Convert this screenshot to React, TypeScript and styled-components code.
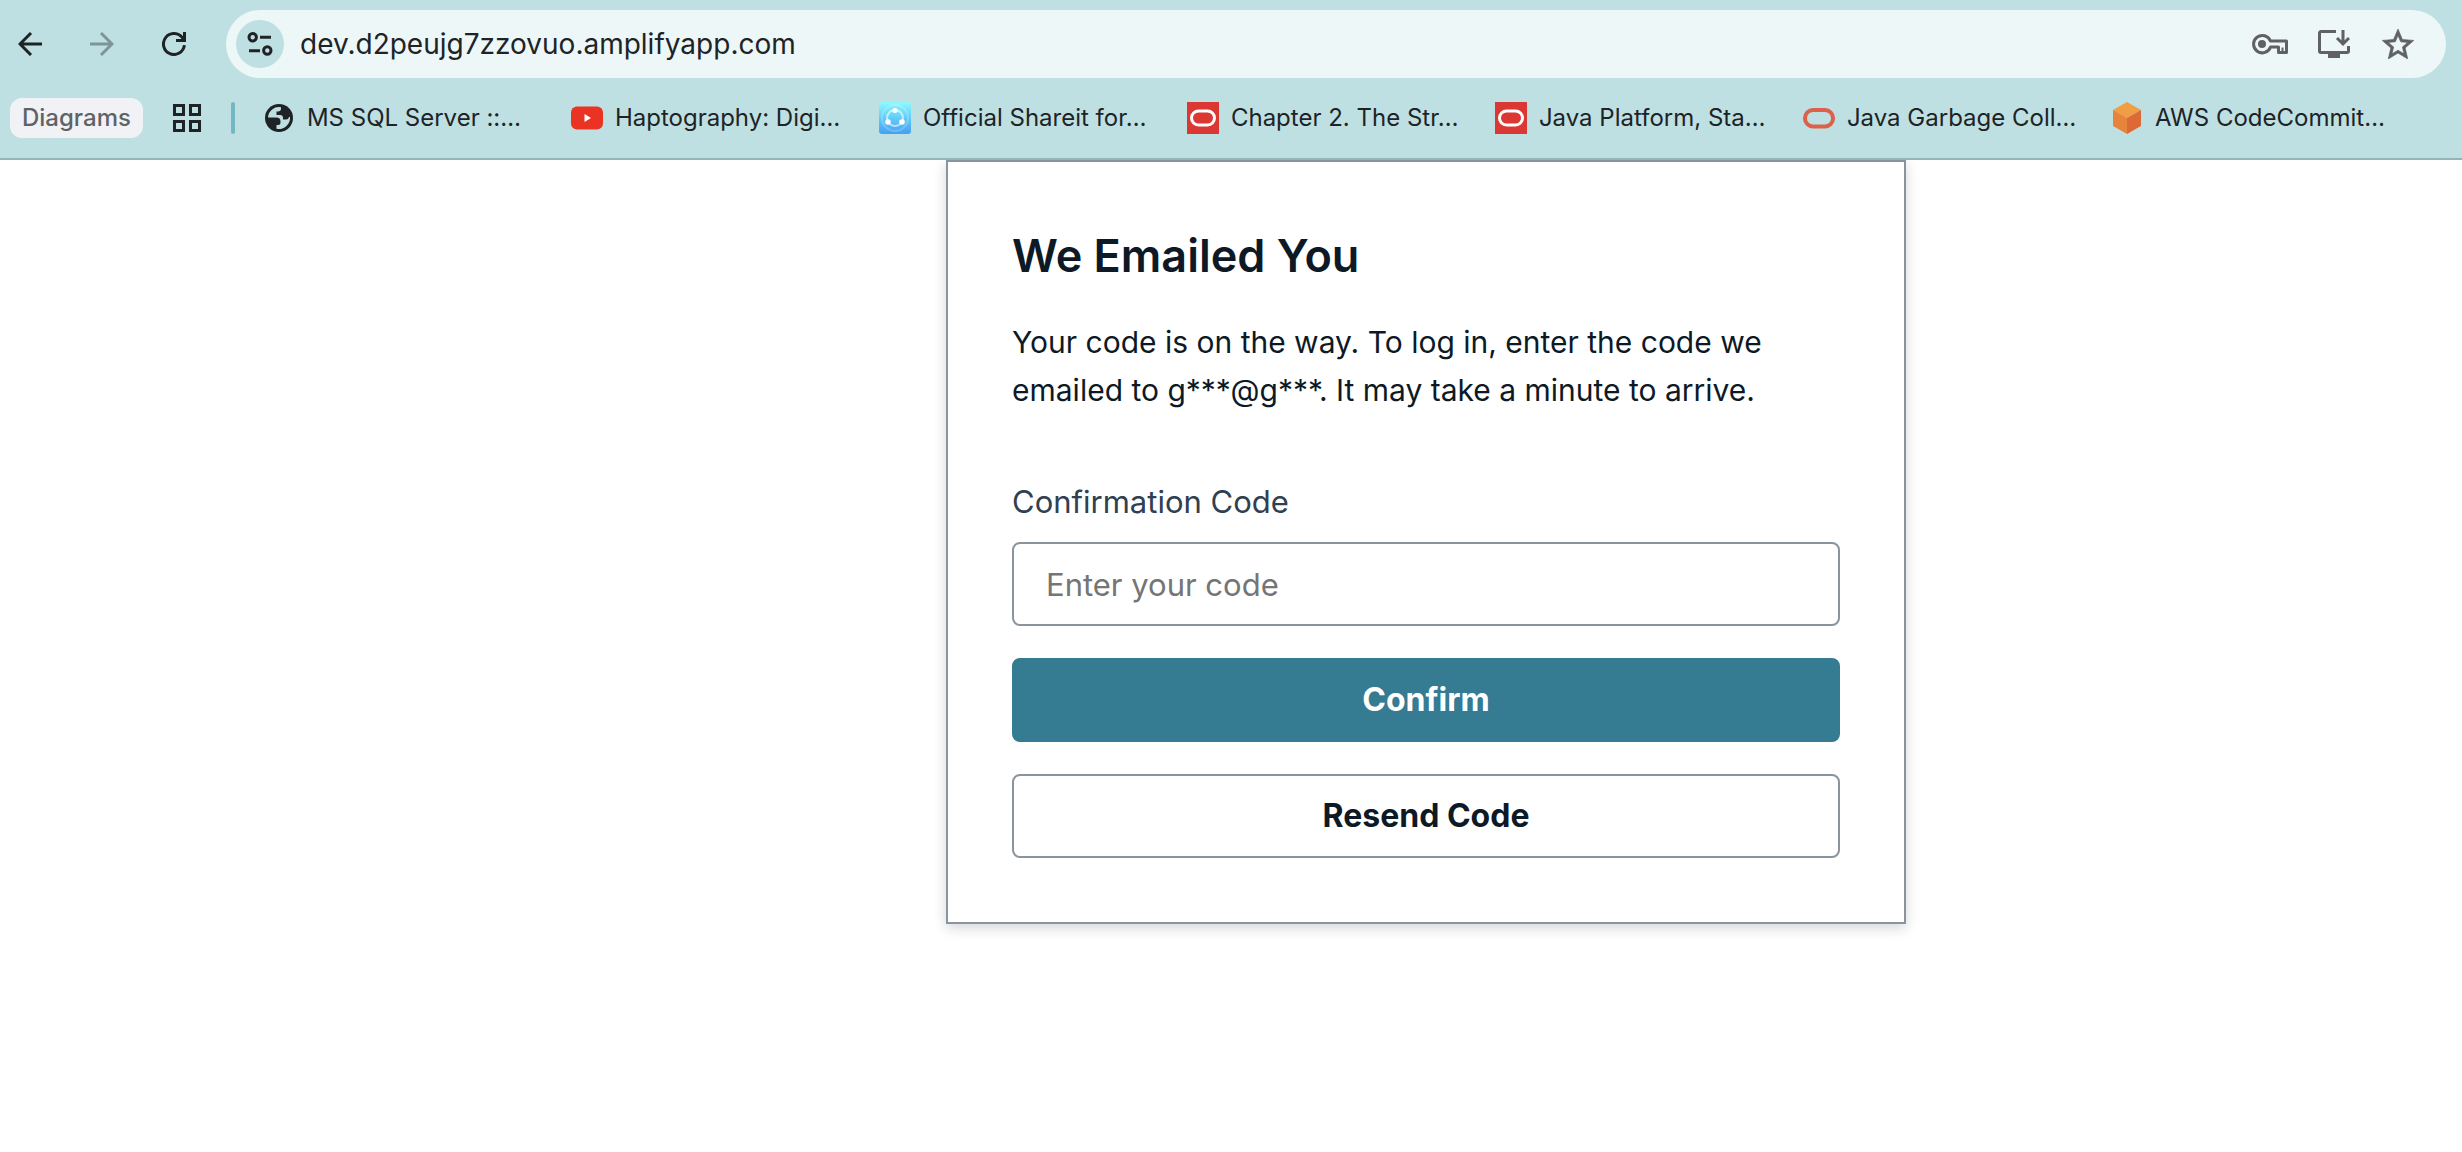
import React from "react";
import styled, { createGlobalStyle, css } from "styled-components";

const GlobalStyle = createGlobalStyle`
  *, *::before, *::after { box-sizing: border-box; }
  html, body { margin: 0; background: #fff; }
  body { font-family: Inter, "Liberation Sans", sans-serif; color: #0d1a26; }
  button, input { font: inherit; color: inherit; }
  button { cursor: pointer; }
`;

/* ---------- browser chrome ---------- */

const Chrome = styled.header`
  position: relative;
  z-index: 1;
  background: #bfe0e2;
  border-bottom: 2px solid #95b3b8;
  color: #202326;
`;

const NavRow = styled.div`
  display: flex;
  align-items: center;
  gap: 24px;
  padding: 10px 16px 0 2px;
`;

const NavButtons = styled.nav`
  display: flex;
  gap: 16px;
`;

const IconButton = styled.button<{ $size: number; $color?: string }>`
  display: flex;
  align-items: center;
  justify-content: center;
  flex: none;
  width: ${(p) => p.$size}px;
  height: ${(p) => p.$size}px;
  padding: 0;
  border: 0;
  border-radius: 50%;
  background: none;
  color: ${(p) => p.$color ?? "#202326"};
`;

const SiteInfo = styled(IconButton)`
  background: #bfe0e2;
`;

const AddressBar = styled.div`
  display: flex;
  flex: 1;
  align-items: center;
  min-width: 0;
  height: 68px;
  padding: 0 28px 0 10px;
  border-radius: 34px;
  background: #edf7f8;
`;

const AddressInput = styled.input`
  flex: 1;
  min-width: 0;
  padding: 0 16px;
  border: 0;
  outline: 0;
  background: none;
  font-size: 28px;
  line-height: 40px;
`;

const AddressActions = styled.div`
  display: flex;
  gap: 24px;
`;

const BookmarkRow = styled.div`
  display: flex;
  align-items: center;
  height: 80px;
  padding-left: 10px;
  overflow: hidden;
  font-size: 24px;
  line-height: 40px;
`;

const GroupChip = styled.button`
  flex: none;
  height: 40px;
  padding: 0 12px;
  border: 0;
  border-radius: 12px;
  background: #f1f2f5;
  color: #5f6368;
  font-weight: 500;
`;

const AppsButton = styled(IconButton)`
  margin: 0 30px;
`;

const Divider = styled.span`
  flex: none;
  width: 4px;
  height: 32px;
  margin-right: 28px;
  border-radius: 2px;
  background: #73b8c0;
`;

const BookmarkList = styled.ul`
  display: flex;
  gap: 40px;
  margin: 0;
  padding: 0;
  list-style: none;
`;

const Bookmark = styled.a`
  display: flex;
  align-items: center;
  gap: 12px;
  width: 268px;
  color: inherit;
  text-decoration: none;
  white-space: nowrap;

  svg { flex: none; }
`;

/* ---------- sign-in page ---------- */

const Page = styled.main`
  display: flex;
  justify-content: center;
  padding: 0 0 32px 390px;
`;

const Card = styled.form`
  width: 960px;
  padding: 64px;
  border: 2px solid #89949f;
  background: #fff;
  box-shadow: 0 4px 12px rgba(13, 26, 38, 0.18);
  display: flex;
  flex-direction: column;
  gap: 32px;
  line-height: 48px;
`;

const Title = styled.h1`
  margin: 0;
  font-size: 45px;
  line-height: 60px;
  font-weight: 600;
`;

const Message = styled.p`
  margin: 0 0 32px;
  font-size: 30px;
`;

const Field = styled.div`
  display: flex;
  flex-direction: column;
  gap: 16px;
  font-size: 31px;
`;

const Label = styled.label`
  color: #304050;
`;

const control = css`
  width: 100%;
  height: 84px;
  border: 2px solid #89949f;
  border-radius: 8px;
  background: #fff;
`;

const CodeInput = styled.input`
  ${control}
  padding: 0 32px;

  &::placeholder { color: #757575; opacity: 1; }
`;

const Action = styled.button<{ $primary?: boolean }>`
  ${control}
  font-size: 32px;
  font-weight: 700;
  ${(p) =>
    p.$primary &&
    css`
      border-color: #357b92;
      background: #357b92;
      color: #fff;
    `}
`;

/* ---------- icons ---------- */

const BackIcon = () => (
  <svg width="24" height="24" viewBox="0 0 24 24" fill="none" stroke="currentColor" strokeWidth="3">
    <path d="M24 12H2M13 1L2 12l11 11" />
  </svg>
);

const ForwardIcon = () => (
  <svg width="24" height="24" viewBox="0 0 24 24" fill="none" stroke="currentColor" strokeWidth="3">
    <path d="M0 12h22M11 1l11 11-11 11" />
  </svg>
);

const ReloadIcon = () => (
  <svg width="24" height="24" viewBox="0 0 24 24" fill="none" stroke="currentColor" strokeWidth="3">
    <path d="M22.4 13.2A10.5 10.5 0 1 1 20.6 6L22 8.5" />
    <path d="M22.5 0v8.5H14" />
  </svg>
);

const TuneIcon = () => (
  <svg width="26" height="24" viewBox="0 0 26 24" fill="none" stroke="currentColor" strokeWidth="3">
    <circle cx="5.7" cy="5.3" r="3.7" />
    <path d="M13 5.3h11M2 18.7h11" />
    <circle cx="20.3" cy="18.5" r="3.7" />
  </svg>
);

const KeyIcon = () => (
  <svg width="36" height="22" viewBox="0 0 36 22" fill="none" stroke="currentColor" strokeWidth="3">
    <path d="M18.4 8H34.5v11.5h-8V14h-8A8.7 8.7 0 1 1 18.4 8z" strokeLinejoin="round" />
    <path d="M30.5 14.5v5" strokeWidth="2" />
    <circle cx="10" cy="11" r="4" fill="currentColor" stroke="none" />
  </svg>
);

const InstallIcon = () => (
  <svg width="32" height="28" viewBox="0 0 32 28" fill="none" stroke="currentColor" strokeWidth="3">
    <path d="M18 1.5H3a1.5 1.5 0 0 0-1.5 1.5v18A1.5 1.5 0 0 0 3 22.5h26a1.5 1.5 0 0 0 1.5-1.5v-5" />
    <path d="M25 0v13M19 8l6 6 6-6" />
    <path d="M10 23h12v5H10z" fill="currentColor" stroke="none" />
  </svg>
);

const StarIcon = () => (
  <svg width="32" height="30" viewBox="2 2 20 19" fill="currentColor" stroke="currentColor" strokeWidth="0.4">
    <path d="M22 9.24l-7.19-.62L12 2 9.19 8.63 2 9.24l5.46 4.73L5.82 21 12 17.27 18.18 21l-1.63-7.03L22 9.24zM12 15.4l-3.76 2.27 1-4.28-3.32-2.88 4.38-.38L12 6.1l1.71 4.04 4.38.38-3.32 2.88 1 4.28L12 15.4z" />
  </svg>
);

const AppsIcon = () => (
  <svg width="28" height="28" viewBox="0 0 28 28" fill="none" stroke="currentColor" strokeWidth="3">
    <path d="M1.5 1.5h9v9h-9zM17.5 1.5h9v9h-9zM1.5 17.5h9v9h-9zM17.5 17.5h9v9h-9z" />
  </svg>
);

const GlobeIcon = () => (
  <svg width="32" height="32" viewBox="0 0 32 32">
    <circle cx="16" cy="16" r="14" fill="#202326" />
    <path
      d="M5 15.500A11 11 0 0 1 18 5.200v1.300a3 3 0 0 1-3 3h-1.500v3.500h3.500a3 3 0 0 1 3 3v1.500h3a3 3 0 0 0 3-2.500h1A11 11 0 0 1 13.500 26.700V23h1.500a2.500 2.500 0 0 0 2.500-2.500v-1a4 4 0 0 0-4-4z"
      fill="#bfe0e2"
    />
  </svg>
);

const YouTubeIcon = () => (
  <svg width="32" height="32" viewBox="0 0 32 32">
    <rect y="4.500" width="32" height="23" rx="6" fill="#ea3323" />
    <path d="M13.500 12v8l6.500-4z" fill="#fff" />
  </svg>
);

const ShareitIcon = () => (
  <svg width="32" height="32" viewBox="0 0 32 32">
    <defs>
      <linearGradient id="shareit" x1="0" y1="0" x2="0" y2="1">
        <stop offset="0" stopColor="#8ffafd" />
        <stop offset="0.500" stopColor="#63ccf9" />
        <stop offset="1" stopColor="#459ff2" />
      </linearGradient>
    </defs>
    <rect width="32" height="32" rx="3" fill="url(#shareit)" />
    <circle cx="16" cy="16" r="13" fill="none" stroke="#fff" strokeOpacity="0.200" strokeWidth="2" />
    <circle cx="16" cy="16" r="8" fill="none" stroke="#fff" strokeOpacity="0.600" strokeWidth="2" />
    <g fill="#fff">
      <circle cx="16" cy="8.500" r="2.500" />
      <circle cx="9" cy="20" r="2.800" />
      <circle cx="23" cy="20" r="2.800" />
    </g>
  </svg>
);

const OracleIcon = () => (
  <svg width="32" height="32" viewBox="0 0 32 32">
    <path d="M0 0h32v32H0z" fill="#dc3833" />
    <rect x="4.500" y="9" width="23" height="14" rx="7" fill="none" stroke="#fff" strokeWidth="3" />
  </svg>
);

const JavaIcon = () => (
  <svg width="32" height="32" viewBox="0 0 32 32">
    <rect x="2" y="8" width="28" height="16.500" rx="8" fill="none" stroke="#dd604a" strokeWidth="4" />
  </svg>
);

const AwsIcon = () => (
  <svg width="32" height="32" viewBox="0 0 32 32">
    <path d="M16 0l14 8-14 8L2 8z" fill="#f09d44" />
    <path d="M2 8l14 8v16L2 24z" fill="#e7843b" />
    <path d="M30 8l-14 8v16l14-8z" fill="#dd6a36" />
  </svg>
);

const bookmarks = [
  { title: "MS SQL Server ::…", Icon: GlobeIcon },
  { title: "Haptography: Digi…", Icon: YouTubeIcon },
  { title: "Official Shareit for…", Icon: ShareitIcon },
  { title: "Chapter 2. The Str…", Icon: OracleIcon },
  { title: "Java Platform, Sta…", Icon: OracleIcon },
  { title: "Java Garbage Coll…", Icon: JavaIcon },
  { title: "AWS CodeCommit…", Icon: AwsIcon },
];

export default function App() {
  return (
    <>
      <GlobalStyle />
      <Chrome>
        <NavRow>
          <NavButtons>
            <IconButton $size={56} aria-label="Back"><BackIcon /></IconButton>
            <IconButton $size={56} $color="#7f9497" aria-label="Forward"><ForwardIcon /></IconButton>
            <IconButton $size={56} aria-label="Reload"><ReloadIcon /></IconButton>
          </NavButtons>
          <AddressBar>
            <SiteInfo $size={48} aria-label="Site information"><TuneIcon /></SiteInfo>
            <AddressInput aria-label="Address" defaultValue="dev.d2peujg7zzovuo.amplifyapp.com" />
            <AddressActions>
              <IconButton $size={40} $color="#5f6163" aria-label="Passwords"><KeyIcon /></IconButton>
              <IconButton $size={40} $color="#5f6163" aria-label="Install app"><InstallIcon /></IconButton>
              <IconButton $size={40} $color="#5f6163" aria-label="Bookmark this page"><StarIcon /></IconButton>
            </AddressActions>
          </AddressBar>
        </NavRow>
        <BookmarkRow>
          <GroupChip>Diagrams</GroupChip>
          <AppsButton $size={28} aria-label="Apps"><AppsIcon /></AppsButton>
          <Divider />
          <BookmarkList>
            {bookmarks.map(({ title, Icon }) => (
              <li key={title}>
                <Bookmark href="#"><Icon />{title}</Bookmark>
              </li>
            ))}
          </BookmarkList>
        </BookmarkRow>
      </Chrome>
      <Page>
        <Card onSubmit={(e) => e.preventDefault()}>
          <Title>We Emailed You</Title>
          <Message>
            Your code is on the way. To log in, enter the code we emailed to g***@g***. It may take a minute to arrive.
          </Message>
          <Field>
            <Label htmlFor="code">Confirmation Code</Label>
            <CodeInput id="code" placeholder="Enter your code" autoComplete="one-time-code" />
          </Field>
          <Action type="submit" $primary>Confirm</Action>
          <Action type="button">Resend Code</Action>
        </Card>
      </Page>
    </>
  );
}
